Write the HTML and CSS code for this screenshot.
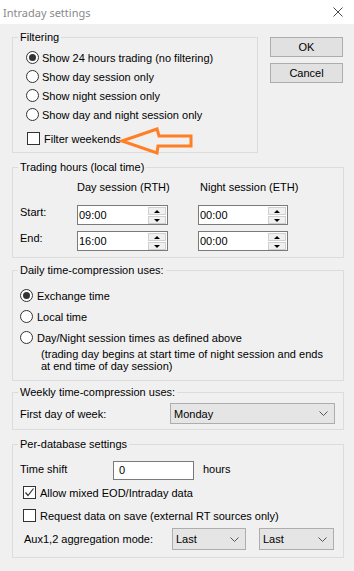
FILE: index.html
```html
<!DOCTYPE html>
<html lang="en">
<head>
  <meta charset="UTF-8" />
  <title>Intraday settings</title>
  <link rel="stylesheet" href="styles.css">
</head>
<body>

<div class="titlebar">
  <span class="title">Intraday settings</span>
  <svg class="close" width="10" height="10" viewBox="0 0 10 10">
    <path d="M0.5 0.5 L9.5 9.5 M9.5 0.5 L0.5 9.5" stroke="#4a4a4a" stroke-width="1" fill="none" />
  </svg>
</div>

<div class="content">

  <div class="top-row">
    <fieldset class="group filtering">
      <legend>Filtering</legend>
      <div class="filter-body">
        <div class="opt"><span class="radio checked"></span>Show 24 hours trading (no filtering)</div>
        <div class="opt"><span class="radio"></span>Show day session only</div>
        <div class="opt"><span class="radio"></span>Show night session only</div>
        <div class="opt"><span class="radio"></span>Show day and night session only</div>
        <div class="opt check-row">
          <span class="checkbox"></span>Filter weekends
          <!-- orange callout arrow drawn over the dialog -->
          <svg class="callout" width="85" height="34" viewBox="115 124 85 34">
            <path d="M122 141 L157 129 L159 136 L191 136 L191 146 L158 146 L157 153 Z"
                  fill="none" stroke="#ff7f27" stroke-width="3" stroke-linejoin="miter" />
          </svg>
        </div>
      </div>
    </fieldset>

    <div class="buttons">
      <button class="btn">OK</button>
      <button class="btn">Cancel</button>
    </div>
  </div>

  <fieldset class="group hours">
    <legend>Trading hours (local time)</legend>
    <div class="hours-body">
      <div class="hours-head">
        <span class="col-day">Day session (RTH)</span>
        <span>Night session (ETH)</span>
      </div>
      <div class="hours-row first">
        <span class="row-label">Start:</span>
        <div class="spin-input day"><span>09:00</span><div class="spinner"><span class="spin-btn"><i class="up"></i></span><span class="spin-btn"><i class="down"></i></span></div></div>
        <div class="spin-input night"><span>00:00</span><div class="spinner"><span class="spin-btn"><i class="up"></i></span><span class="spin-btn"><i class="down"></i></span></div></div>
      </div>
      <div class="hours-row">
        <span class="row-label">End:</span>
        <div class="spin-input day"><span>16:00</span><div class="spinner"><span class="spin-btn"><i class="up"></i></span><span class="spin-btn"><i class="down"></i></span></div></div>
        <div class="spin-input night"><span>00:00</span><div class="spinner"><span class="spin-btn"><i class="up"></i></span><span class="spin-btn"><i class="down"></i></span></div></div>
      </div>
    </div>
  </fieldset>

  <fieldset class="group daily">
    <legend>Daily time-compression uses:</legend>
    <div class="daily-body">
      <div class="opt wide"><span class="radio checked"></span>Exchange time</div>
      <div class="opt wide"><span class="radio"></span>Local time</div>
      <div class="opt wide"><span class="radio"></span>Day/Night session times as defined above</div>
      <p class="note">(trading day begins at start time of night session and ends<br>at end time of day session)</p>
    </div>
  </fieldset>

  <fieldset class="group weekly">
    <legend>Weekly time-compression uses:</legend>
    <div class="weekly-body">
      <span class="week-label">First day of week:</span>
      <div class="select week-select">
        <span>Monday</span>
        <svg width="9" height="5" viewBox="0 0 9 5"><path d="M0.5 0.5 L4.5 4.5 L8.5 0.5" fill="none" stroke="#555" stroke-width="1" /></svg>
      </div>
    </div>
  </fieldset>

  <fieldset class="group perdb">
    <legend>Per-database settings</legend>
    <div class="perdb-body">
      <div class="shift-row">
        <span class="shift-label">Time shift</span>
        <div class="text-input">0</div>
        <span class="shift-unit">hours</span>
      </div>
      <div class="opt db-check first">
        <span class="checkbox checked">
          <svg width="11" height="11" viewBox="0 0 11 11"><path d="M1.5 5.5 L4 8.5 L9.5 1.5" fill="none" stroke="#333" stroke-width="1.2" /></svg>
        </span>Allow mixed EOD/Intraday data
      </div>
      <div class="opt db-check"><span class="checkbox"></span>Request data on save (external RT sources only)</div>
      <div class="aux-row">
        <span class="aux-label">Aux1,2 aggregation mode:</span>
        <div class="select aux-select">
          <span>Last</span>
          <svg width="9" height="5" viewBox="0 0 9 5"><path d="M0.5 0.5 L4.5 4.5 L8.5 0.5" fill="none" stroke="#555" stroke-width="1" /></svg>
        </div>
        <div class="select aux-select second">
          <span>Last</span>
          <svg width="9" height="5" viewBox="0 0 9 5"><path d="M0.5 0.5 L4.5 4.5 L8.5 0.5" fill="none" stroke="#555" stroke-width="1" /></svg>
        </div>
      </div>
    </div>
  </fieldset>

</div>

</body>
</html>
```

FILE: styles.css
```css
* {
  box-sizing: border-box;
}
body {
  margin: 0;
  width: 354px;
  height: 571px;
  overflow: hidden;
  background: #f0f0f0;
  font-family: "Liberation Sans", Arial, sans-serif;
  font-size: 11px;
  color: #000;
}

/* title bar */
.titlebar {
  height: 24px;
  background: #fff;
  display: flex;
  align-items: center;
  justify-content: space-between;
  padding: 0 11px 0 3px;
}
.title {
  font-family: "Noto Sans", sans-serif;
  font-size: 11px;
  color: #8a8a8a;
}

.content {
  padding: 0 10px 0 12px;
}

/* group boxes */
.group {
  margin: 0;
  padding: 0;
  min-width: 0;
  border: 1px solid #dcdcdc;
}
.group legend {
  margin-left: 5px;
  padding: 0 2px;
  line-height: 13px;
}

.opt {
  display: flex;
  align-items: center;
  height: 19px;
  white-space: nowrap;
}
.radio {
  width: 13px;
  height: 13px;
  border: 1px solid #333;
  border-radius: 50%;
  background: #fff;
  margin-right: 3px;
  display: flex;
  align-items: center;
  justify-content: center;
  flex: none;
}
.radio.checked::after {
  content: "";
  width: 7px;
  height: 7px;
  border-radius: 50%;
  background: #333;
}
.checkbox {
  width: 13px;
  height: 13px;
  border: 1px solid #333;
  background: #fff;
  margin-right: 4px;
  display: flex;
  align-items: center;
  justify-content: center;
  flex: none;
}

/* filtering */
.top-row {
  display: flex;
  align-items: flex-start;
  margin-top: 7px;
}
.filtering {
  width: 246px;
}
.filter-body {
  padding: 4px 0 4px 13px;
}
.check-row {
  position: relative;
  margin-top: 5px;
  padding-left: 1px;
}
.callout {
  position: absolute;
  left: 89px;
  top: -5px;
}
.buttons {
  display: flex;
  flex-direction: column;
  gap: 6px;
  margin: 6px 0 0 12px;
}
.btn {
  width: 73px;
  height: 20px;
  padding: 0;
  background: #e1e1e1;
  border: 1px solid #adadad;
  font-family: inherit;
  font-size: 11px;
  color: #000;
}

/* trading hours */
.group.hours {
  margin-top: 8px;
}
.hours-body {
  padding: 7px 0 6px 7px;
}
.hours-head {
  display: flex;
  padding-left: 57px;
  line-height: 13px;
}
.col-day {
  width: 123px;
}
.hours-row {
  display: flex;
  align-items: flex-start;
  margin-top: 6px;
}
.hours-row.first {
  margin-top: 11px;
}
.row-label {
  width: 57px;
  line-height: 13px;
  padding-top: 1px;
}
.spin-input {
  height: 20px;
  border: 1px solid #7a7a7a;
  background: #fff;
  display: flex;
  align-items: center;
  justify-content: space-between;
  padding: 0 1px 0 1px;
}
.spin-input.day {
  width: 91px;
  margin-right: 30px;
}
.spin-input.night {
  width: 90px;
}
.spinner {
  display: flex;
  flex-direction: column;
  gap: 1px;
  width: 18px;
  height: 17px;
  margin-top: 1px;
}
.spin-btn {
  flex: 1;
  border: 1px solid #d0d0d0;
  background: #f0f0f0;
  display: flex;
  align-items: center;
  justify-content: center;
}
.spin-btn i {
  width: 0;
  height: 0;
  border-left: 3px solid transparent;
  border-right: 3px solid transparent;
}
.spin-btn .up {
  border-bottom: 3px solid #000;
}
.spin-btn .down {
  border-top: 3px solid #000;
}

/* daily */
.group.daily {
  margin-top: 6px;
}
.daily-body {
  padding: 8px 0 8px 7px;
}
.opt.wide {
  height: 21px;
}
.opt.wide .radio {
  margin-right: 4px;
}
.note {
  margin: 0 0 0 21px;
  line-height: 12px;
  white-space: nowrap;
}

/* weekly */
.group.weekly {
  margin-top: 5px;
}
.weekly-body {
  display: flex;
  align-items: center;
  padding: 4px 0 5px 7px;
}
.week-label {
  width: 150px;
}
.select {
  display: flex;
  align-items: center;
  justify-content: space-between;
  background: #e5e5e5;
  border: 1px solid #adadad;
  padding: 0 6px 0 3px;
}
.week-select {
  width: 165px;
  height: 21px;
}

/* per-database */
.group.perdb {
  margin-top: 8px;
}
.perdb-body {
  padding: 10px 0 7px 7px;
}
.shift-row {
  display: flex;
  align-items: center;
}
.shift-label {
  width: 93px;
  margin-top: -3px;
}
.text-input {
  width: 81px;
  height: 19px;
  line-height: 17px;
  border: 1px solid #7a7a7a;
  background: #fff;
  padding-left: 5px;
  margin-right: 9px;
}
.shift-unit {
  margin-top: -3px;
}
.db-check {
  margin-top: 4px;
  padding-left: 3px;
}
.db-check.first {
  margin-top: 3px;
}
.aux-row {
  display: flex;
  align-items: center;
  margin-top: 3px;
}
.aux-label {
  width: 148px;
  padding-left: 4px;
  margin-right: 4px;
}
.aux-select {
  width: 74px;
  height: 22px;
}
.aux-select.second {
  width: 75px;
  margin-left: 13px;
}
```
